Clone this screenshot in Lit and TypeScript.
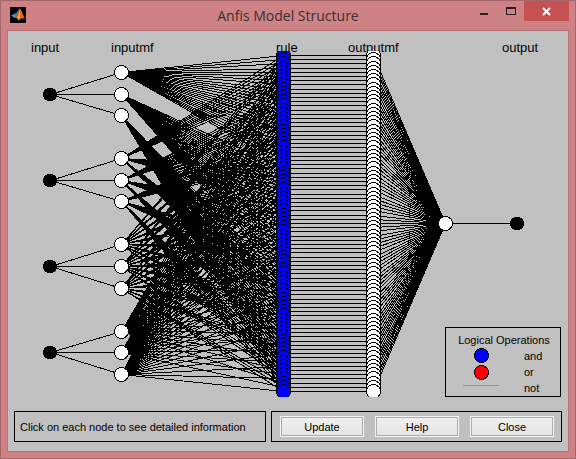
import { LitElement, html, svg, css } from "lit";
import { customElement, state } from "lit/decorators.js";

const INPUTS = 4;
const MFS = 3;
const RULES = MFS ** INPUTS;

const INPUT_X = 42;
const MF_X = 113;
const RULE_X = 275;
const OUTMF_X = 365;
const SUM_X = 437;
const OUT_X = 509;
const MID_Y = 192;
const R = 7;

const mfY = (input: number, mf: number) => Math.round(41 + input * 86.2 + mf * 21.6);
const ruleY = (i: number) => Math.round(24 + i * 4.2);

const line = (x1: number, y1: number, x2: number, y2: number) =>
  svg`<line x1=${x1 + 0.5} y1=${y1 + 0.5} x2=${x2 + 0.5} y2=${y2 + 0.5} />`;
const node = (x: number, y: number, kind: string) =>
  svg`<circle class=${kind} cx=${x + 0.5} cy=${y + 0.5} r=${R} />`;
const terminal = (x: number, y: number) =>
  svg`<circle class="solid" cx=${x} cy=${y + 0.5} r=${R} />`;
const range = (n: number) => Array.from({ length: n }, (_, i) => i);

@customElement("anfis-network")
export class AnfisNetwork extends LitElement {
  static styles = css`
    :host { display: block; }
    svg { display: block; width: 100%; height: auto; }
    .shapes { shape-rendering: crispEdges; stroke: #000; stroke-width: 1px; }
    .solid { fill: #000; stroke: none; }
    .open { fill: #fff; }
    .and { fill: #00f; }
    text { font: 13px "Liberation Sans", Arial, sans-serif; fill: #000; }
  `;

  render() {
    const inputs = range(INPUTS);
    const mfs = range(MFS);
    const rules = range(RULES);
    return html`<svg viewBox="0 0 560 372" role="img" aria-label="ANFIS network">
      <defs><clipPath id="axes"><rect x="0" y="20" width="560" height="346" /></clipPath></defs>
      <text x="23" y="21">input</text>
      <text x="103" y="21">inputmf</text>
      <text x="268" y="21">rule</text>
      <text x="340" y="21">outputmf</text>
      <text x="494" y="21">output</text>
      <g class="shapes" clip-path="url(#axes)">
        ${inputs.map((n) => mfs.map((m) => line(INPUT_X, mfY(n, 1), MF_X, mfY(n, m))))}
        ${rules.map((i) =>
          inputs.map((n) => {
            const m = Math.floor(i / MFS ** (INPUTS - 1 - n)) % MFS;
            return line(MF_X, mfY(n, m), RULE_X, ruleY(i));
          }))}
        ${rules.map((i) => line(RULE_X, ruleY(i), OUTMF_X, ruleY(i)))}
        ${rules.map((i) => line(OUTMF_X, ruleY(i), SUM_X, MID_Y))}
        ${line(SUM_X, MID_Y, OUT_X, MID_Y)}
        ${inputs.map((n) => terminal(INPUT_X, mfY(n, 1)))}
        ${inputs.map((n) => mfs.map((m) => node(MF_X, mfY(n, m), "open")))}
        ${rules.map((i) => node(RULE_X, ruleY(i), "and"))}
        ${rules.map((i) => node(OUTMF_X, ruleY(i), "open"))}
        ${node(SUM_X, MID_Y, "open")}
        ${terminal(OUT_X, MID_Y)}
      </g>
    </svg>`;
  }
}

@customElement("app-root")
export class AppRoot extends LitElement {
  @state() private message = "Click on each node to see detailed information";

  static styles = css`
    :host { display: block; font: 11px/15px "Liberation Sans", Arial, sans-serif; color: #000; }
    * { box-sizing: border-box; }
    .window { background: #cf8286; border: 1px solid #a4666a; padding: 0 6px 6px; }
    .titlebar { display: grid; grid-template-columns: 1fr auto 1fr; height: 29px; }
    .logo { width: 16px; height: 16px; margin: 6px 3px; }
    .title { margin: 0; font: 14px/29px "Open Sans", "Noto Sans", sans-serif; color: #333; }
    .controls { display: flex; justify-content: flex-end; align-items: flex-start; }
    .control { width: 27px; height: 20px; padding: 0; border: 0; background: none; }
    .control svg { display: block; width: 100%; height: 100%; }
    .close { width: 45px; background: #c75050; }
    .content { background: #c0c0c0; border: 1px solid #b87276; }
    .stage { display: grid; }
    .stage > * { grid-area: 1 / 1; }
    .legend {
      align-self: end; justify-self: end; width: 116px; height: 70px; margin: 0 7px 6px 0;
      border: 1px solid #000; padding: 5px 0 0;
    }
    .legend-title { margin: 0; padding-left: 2px; text-align: center; font: inherit; }
    .keys { list-style: none; margin: 0; padding: 0; }
    .key { display: grid; grid-template-columns: 36px 1fr; column-gap: 25px; padding-left: 17px; height: 16px; line-height: 16px; }
    .key svg { display: block; width: 36px; height: 16px; shape-rendering: crispEdges; }
    .footer { display: grid; grid-template-columns: 252fr 291fr; gap: 5px; padding: 8px 6px 9px; }
    .panel { display: flex; align-items: center; height: 31px; border: 1px solid #000; }
    .status { padding: 2px 0 0 5px; white-space: nowrap; }
    .actions { gap: 11px; padding: 0 7px 0 8px; }
    .action {
      flex: 1; height: 21px; padding: 2px 0 0; font: inherit; color: #000; border: 1px solid #f4f4f4;
      background: linear-gradient(#f0f0f0, #e4e4e4); box-shadow: inset 0 0 0 1px #acacac;
    }
  `;

  render() {
    return html`<div class="window">
      <header class="titlebar">
        <svg class="logo" viewBox="0 0 16 16" aria-hidden="true">
          <rect width="16" height="16" fill="#000" />
          <path d="M1 8.500 5 6.500 7.500 8 5 11Z" fill="#4a9cc0" />
          <path d="M5 6.500C7 6 8 3 9.500 1.500L8 8 5.500 11Z" fill="#3c7c9c" />
          <path d="M9.500 1.500C11.500 2 13 8 15 12 12 10 10 12 8.500 14 8 12 7 11 5 11 8 9 8.500 4 9.500 1.500Z" fill="#e0661c" />
          <path d="M9.500 3C10.500 6 10.500 10 8.500 13 8 11 8 10 7.500 10 9 8 9 5 9.500 3Z" fill="#f8b030" />
        </svg>
        <h1 class="title">Anfis Model Structure</h1>
        <div class="controls">
          <button class="control" aria-label="Minimize"><svg viewBox="0 0 27 20"><path d="M10 12h8v2h-8z" fill="#222" /></svg></button>
          <button class="control" aria-label="Maximize"><svg viewBox="0 0 27 20"><path d="M9 6h10v8h-10zM10 8v5h8v-5z" fill="#222" fill-rule="evenodd" /></svg></button>
          <button class="control close" aria-label="Close window"><svg viewBox="0 0 45 20"><path d="M19 7l7 7M26 7l-7 7" stroke="#fff" stroke-width="2" /></svg></button>
        </div>
      </header>
      <main class="content">
        <div class="stage">
          <anfis-network></anfis-network>
          <section class="legend">
            <h2 class="legend-title">Logical Operations</h2>
            <ul class="keys">
              <li class="key"><svg viewBox="0 0 36 16"><circle cx="18.500" cy="7.500" r="7" fill="#00f" stroke="#000" /></svg>and</li>
              <li class="key"><svg viewBox="0 0 36 16"><circle cx="18.500" cy="8.500" r="7" fill="#f00" stroke="#000" /></svg>or</li>
              <li class="key"><svg viewBox="0 0 36 16"><path d="M0 5.500h36" stroke="#0f0" /></svg>not</li>
            </ul>
          </section>
        </div>
        <footer class="footer">
          <div class="panel status" role="status">${this.message}</div>
          <div class="panel actions">
            <button class="action">Update</button>
            <button class="action">Help</button>
            <button class="action">Close</button>
          </div>
        </footer>
      </main>
    </div>`;
  }
}
